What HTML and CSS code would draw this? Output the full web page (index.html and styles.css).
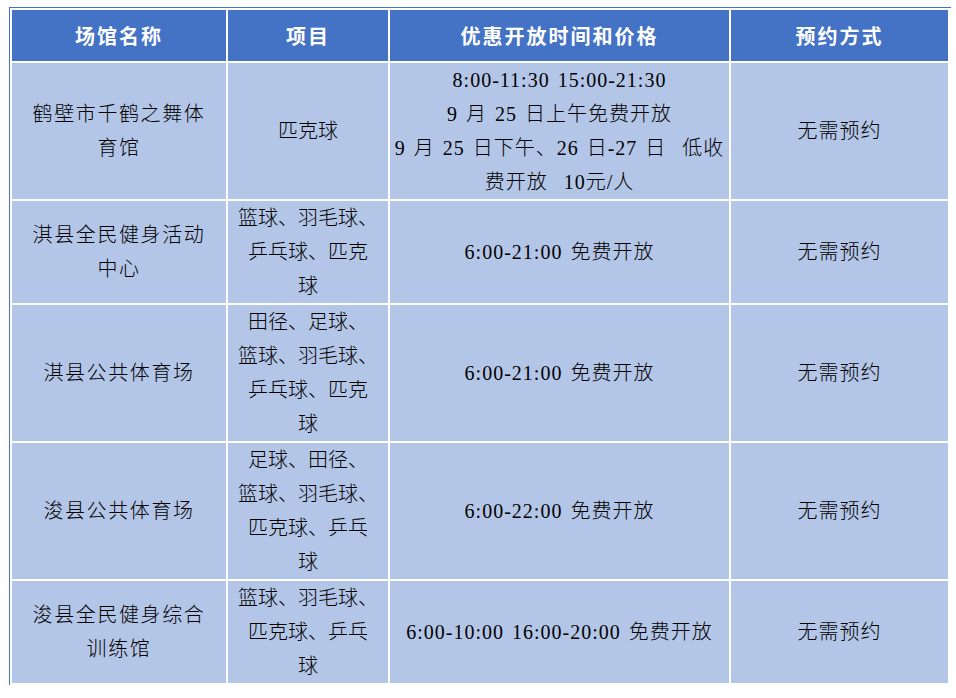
FILE: index.html
```html
<!DOCTYPE html>
<html lang="zh-CN">
<head>
<meta charset="utf-8">
<title>场馆开放</title>
<link rel="stylesheet" href="styles.css">
</head>
<body>
<div class="frame">
  <table class="venues">
    <colgroup>
      <col class="c-name">
      <col class="c-item">
      <col class="c-time">
      <col class="c-book">
    </colgroup>
    <thead>
      <tr>
        <th>场馆名称</th>
        <th>项目</th>
        <th>优惠开放时间和价格</th>
        <th>预约方式</th>
      </tr>
    </thead>
    <tbody>
      <tr class="r4">
        <td class="name">鹤壁市千鹤之舞体育馆</td>
        <td class="item">匹克球</td>
        <td class="time">
          <div>8:00-11:30 15:00-21:30</div>
          <div>9 月 25 日上午免费开放</div>
          <div>9 月 25 日下午、26 日-27 日&nbsp; 低收费开放&nbsp; 10元/人</div>
        </td>
        <td class="book">无需预约</td>
      </tr>
      <tr class="r3">
        <td class="name">淇县全民健身活动中心</td>
        <td class="item">篮球、羽毛球、<br>乒乓球、匹克<br>球</td>
        <td class="time"><div>6:00-21:00 免费开放</div></td>
        <td class="book">无需预约</td>
      </tr>
      <tr class="r4">
        <td class="name">淇县公共体育场</td>
        <td class="item">田径、足球、<br>篮球、羽毛球、<br>乒乓球、匹克<br>球</td>
        <td class="time"><div>6:00-21:00 免费开放</div></td>
        <td class="book">无需预约</td>
      </tr>
      <tr class="r4">
        <td class="name">浚县公共体育场</td>
        <td class="item">足球、田径、<br>篮球、羽毛球、<br>匹克球、乒乓<br>球</td>
        <td class="time"><div>6:00-22:00 免费开放</div></td>
        <td class="book">无需预约</td>
      </tr>
      <tr class="r3">
        <td class="name">浚县全民健身综合训练馆</td>
        <td class="item">篮球、羽毛球、<br>匹克球、乒乓<br>球</td>
        <td class="time"><div>6:00-10:00 16:00-20:00 免费开放</div></td>
        <td class="book">无需预约</td>
      </tr>
    </tbody>
  </table>
</div>
</body>
</html>
```

FILE: styles.css
```css
html, body {
  margin: 0;
  padding: 0;
  background: #ffffff;
}

body {
  font-family: "Liberation Serif", "Noto Sans CJK SC", serif;
  color: #000000;
}

.frame {
  margin: 7px 0 0 9px;
  width: 941px;
  border-top: 1px solid #4472C4;
  border-left: 1px solid #4472C4;
}

.venues {
  border-collapse: separate;
  border-spacing: 2px;
  table-layout: fixed;
  width: 940px;
}

.c-name { width: 214px; }
.c-item { width: 160px; }
.c-time { width: 339px; }
.c-book { width: 217px; }

.venues th {
  background: #4472C4;
  color: #ffffff;
  height: 51px;
  padding: 0;
  font-family: "Noto Sans CJK SC", sans-serif;
  font-weight: 700;
  font-size: 20px;
  letter-spacing: 2px;
  text-align: center;
  vertical-align: middle;
  line-height: 51px;
}

.venues td {
  background: #B4C6E7;
  padding: 0;
  font-size: 20px;
  line-height: 34px;
  font-weight: 300;
  text-align: center;
  vertical-align: middle;
}

.r4 td { height: 136px; }
.r3 td { height: 102px; }

.venues td.name {
  padding: 0 14px;
  letter-spacing: 1.6px;
}

.venues td.item {
  padding: 0 4px;
}

.venues td.time {
  padding: 0 2px;
  letter-spacing: 1px;
  word-spacing: 2px;
}

.venues td.book {
  letter-spacing: 1px;
}
```
